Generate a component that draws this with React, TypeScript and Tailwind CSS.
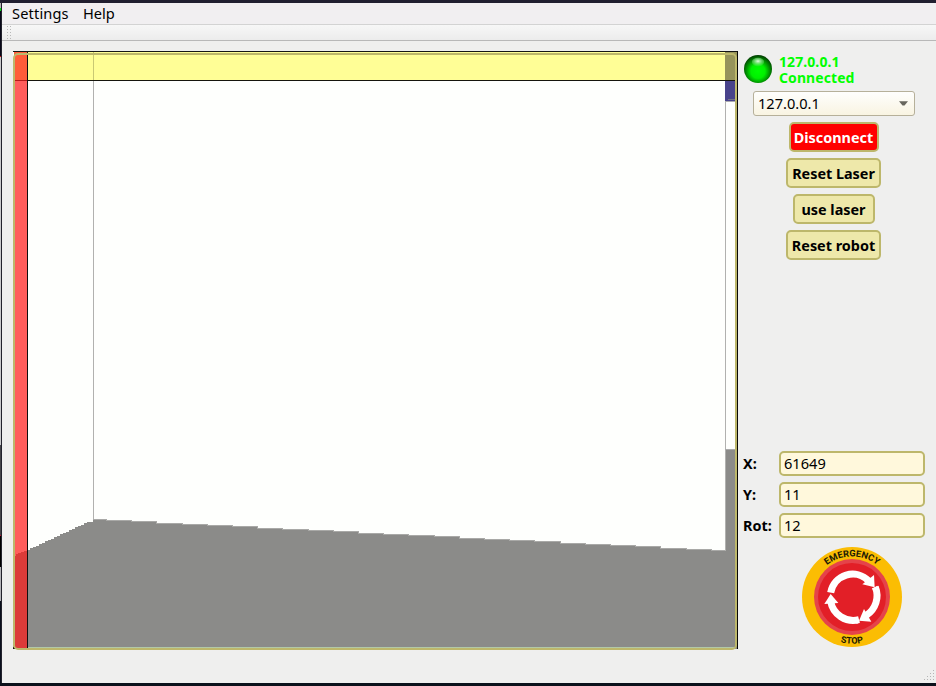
import React from "react";

const FONT = "font-['Noto_Sans','Open_Sans',sans-serif]";

function Edge() {
  return (
    <div className="flex w-[2px] shrink-0 flex-col border-r border-[#22222c] bg-[#0a0f1c]">
      <div className="h-[5px] bg-[#b5b5b5]" />
      <div className="h-[3px] bg-[#00e010]" />
      <div className="h-[45px] bg-[#080818]" />
      <div className="h-px bg-[#d01010]" />
      <div className="h-[388px] bg-[#c9c9cb]" />
      <div className="h-[90px] bg-[#45454a]" />
      <div className="h-px bg-[#c01030]" />
      <div className="h-[31px] bg-black" />
      <div className="h-[34px] bg-[#b4b4b8]" />
    </div>
  );
}

const rampSteps = [
  "M0 505", "H3", "V503",
  ...Array.from({ length: 24 }, (_, i) => `H${5 + i * 3} V${(503 - i * 1.4).toFixed(0)}`),
  "H80 V468 H93",
].join(" ");
const slopeSteps = Array.from(
  { length: 25 },
  (_, i) => `H${Math.round(93 + i * 25.2)} V${Math.round(469 + i * 1.25)}`
).join(" ");
const profile = `${rampSteps} ${slopeSteps} H713 V398 H724 V598 H0 Z`;

function ScanView() {
  return (
    <svg className="block h-[600px] w-[725px] shrink-0" viewBox="0 0 725 600" shapeRendering="crispEdges">
      <rect x="0" y="0" width="725" height="597" fill="#fefffd" />
      <path d={profile} fill="#8b8b89" />
      <path d={`M80 468.5 H93 ${slopeSteps.replace(/V(\d+)/g, "V$1.5")} H713`} fill="none" stroke="#a9a9a7" />
      <rect x="80" y="1" width="1" height="467" fill="#b1b1af" />
      <rect x="712" y="30" width="1" height="470" fill="#b1b1af" />
      <rect x="712" y="398" width="11" height="1" fill="#aaa" />
      <rect x="713" y="30" width="9" height="20" fill="#48438b" />
      <rect x="712" y="30" width="1" height="20" fill="#48438b" />
      <rect x="715" y="48" width="7" height="1" fill="#747487" />
      <rect x="713" y="50" width="9" height="1" fill="#aaaaaf" />
      <rect x="14" y="1" width="710" height="28" fill="#fffe96" />
      <rect x="712" y="1" width="12" height="28" fill="#96935a" />
      <rect x="80" y="1" width="1" height="28" fill="#c9c873" />
      <rect x="0" y="29" width="724" height="1" fill="#15150c" />
      <rect x="1" y="1" width="13" height="596" fill="#ff0000" fillOpacity="0.635" />
      <path d="M1 505H3V503H5V502H8V501H11V500H14V597H1Z" fill="#dc3b39" />
      <rect x="1" y="1" width="13" height="28" fill="#ff5d39" />
      <rect x="1" y="29" width="13" height="1" fill="#b51919" />
      <rect x="14" y="0" width="1" height="597" fill="#101010" />
      <rect x="0" y="0" width="725" height="1" fill="#151515" />
      <rect x="0" y="596" width="2" height="2" fill="#151515" />
      <rect x="724" y="0" width="1" height="598" fill="#080808" />
      <rect x="15" y="596" width="707" height="1" fill="#b2c8a7" />
      <rect x="1" y="3" width="722" height="595" rx="4" fill="none" stroke="#bdb76b" strokeWidth="2" shapeRendering="auto" />
    </svg>
  );
}

function Led() {
  return (
    <svg className="h-7 w-7 shrink-0" viewBox="0 0 28 28">
      <defs>
        <radialGradient id="led" cx="50%" cy="58%" r="56%">
          <stop offset="0" stopColor="#00ff00" />
          <stop offset=".45" stopColor="#00f000" />
          <stop offset=".75" stopColor="#009000" />
          <stop offset="1" stopColor="#004300" />
        </radialGradient>
        <radialGradient id="shine" cx="50%" cy="40%" r="55%">
          <stop offset="0" stopColor="#e0ffe0" />
          <stop offset="1" stopColor="#70e070" stopOpacity=".3" />
        </radialGradient>
      </defs>
      <circle cx="14" cy="14" r="14" fill="url(#led)" />
      <ellipse cx="14" cy="7" rx="6.2" ry="4.2" fill="url(#shine)" />
    </svg>
  );
}

function EmergencyStop() {
  return (
    <svg className="block h-[100px] w-[100px]" viewBox="36 21 300 300">
      <defs>
        <path id="arcTop" d="M64 171 A122 122 0 0 1 308 171" />
        <path id="arcBottom" d="M46 171 A140 140 0 0 0 326 171" />
      </defs>
      <circle cx="186" cy="171" r="150" fill="#fbbd03" />
      <circle cx="186" cy="171" r="114" fill="#e5434a" />
      <circle cx="186" cy="171" r="102" fill="#e21f27" />
      <g fill="none" stroke="#fff" strokeWidth="21">
        <path d="M122 158 A67 68 0 0 1 236 123" />
        <path d="M256 141 A70 70 0 0 1 229 226" />
        <path d="M207 239 A69 69 0 0 1 122 184" />
      </g>
      <g fill="#fff">
        <path d="M252 105 L254 142 L217 133 Z" />
        <path d="M244 245 L207 242 L222 207 Z" />
        <path d="M103 192 L122 162 L145 189 Z" />
        <path d="M245 147 L262 137 L268 155 Z" />
        <path d="M196 230 L209 246 L200 252 Z" />
      </g>
      <g className="font-['Roboto',sans-serif] font-bold" fill="#201a05" fontSize="27">
        <text textAnchor="middle" textLength="163" lengthAdjust="spacingAndGlyphs">
          <textPath href="#arcTop" startOffset="50%">EMERGENCY</textPath>
        </text>
        <text textAnchor="middle">
          <textPath href="#arcBottom" startOffset="50%">STOP</textPath>
        </text>
      </g>
    </svg>
  );
}

function ActionButton({ label, className }: { label: string; className: string }) {
  return (
    <button className={`flex h-[30px] items-center justify-center whitespace-nowrap rounded-[5px] border-2 border-[#bdb76b] pt-[2px] text-[14.4px] font-bold leading-none ${className}`}>
      {label}
    </button>
  );
}

function Field({ label, value }: { label: string; value: string }) {
  return (
    <div className="flex h-[25px] items-center">
      <span className="w-9 shrink-0 whitespace-nowrap pt-[2px] text-[14.4px] font-bold leading-none">{label}</span>
      <div className="flex h-[25px] w-[146px] items-center rounded-[5px] border-2 border-[#bdb76b] bg-[#fff8dc] pl-[3px] text-[14.6px] leading-none">
        {value}
      </div>
    </div>
  );
}

export default function App() {
  return (
    <div className={`flex h-[686px] w-[936px] flex-col overflow-hidden bg-[#efefee] text-black ${FONT}`}>
      <div className="h-[3px] shrink-0 bg-[#211f30]" />
      <div className="flex h-[680px]">
        <Edge />
        <div className="flex min-w-0 flex-1 flex-col">
          <nav className="flex h-[21px] items-center gap-[14px] bg-[#f1eff1] pl-[10px] text-[14.6px] leading-none">
            <span className="w-[57px] tracking-[0.15px]">Settings</span>
            <span>Help</span>
          </nav>
          <div className="flex h-[17px] items-center border-b border-t border-b-[#b8b8b8] border-t-[#d3d3d3] bg-gradient-to-b from-[#f7f7f7] to-[#ececec] pl-[5px]">
            <svg className="h-[15px] w-[6px]" viewBox="0 0 6 15" shapeRendering="crispEdges">
              {[0, 3, 6, 9, 12].map((y) => (
                <g key={y} fill="#b8b8b8">
                  <rect x="0" y={y + 1} width="1" height="1" />
                  <rect x="3" y={y + 1} width="1" height="1" />
                </g>
              ))}
            </svg>
          </div>
          <main className="flex h-[610px] pl-[11px] pt-[10px]">
            <ScanView />
            <aside className="flex h-[600px] w-[198px] flex-col pl-[5px]">
              <div className="flex h-9 items-start gap-[7px] pl-px pt-[4px]">
                <Led />
                <div className="-mt-px whitespace-pre text-[14px] font-bold leading-4 tracking-[0.08px] text-[#00ff00]">
                  {"127.0.0.1\nConnected"}
                </div>
              </div>
              <div className="ml-[10px] mt-[4px] flex h-[25px] w-[162px] items-center justify-between rounded-[3px] border border-[#b6b09a] bg-gradient-to-b from-[#fefefd] to-[#f9f4e2] pl-1 pr-[6px] text-[14.6px] leading-none">
                <span>127.0.0.1</span>
                <svg className="h-[5px] w-[9px]" viewBox="0 0 9 5">
                  <path d="M0 .3H9L5.5 4.5H3.5Z" fill="#67665e" />
                </svg>
              </div>
              <div className="mt-[6px] flex w-[181px] flex-col items-center gap-[6px]">
                <ActionButton label="Disconnect" className="w-[90px] bg-[#ff0000] text-white" />
                <ActionButton label="Reset Laser" className="w-[95px] bg-[#eee8aa]" />
                <ActionButton label="use laser" className="w-[82px] bg-[#eee8aa]" />
                <ActionButton label="Reset robot" className="w-[95px] bg-[#eee8aa]" />
              </div>
              <div className="mt-[191px] flex flex-col gap-[6px]">
                <Field label="X:" value="61649" />
                <Field label="Y:" value="11" />
                <Field label="Rot:" value="12" />
              </div>
              <div className="mt-[9px] pl-[59px]">
                <EmergencyStop />
              </div>
            </aside>
          </main>
          <footer className="flex flex-1 items-end justify-end pb-[2px] pr-px">
            <svg className="h-[11px] w-[12px]" viewBox="0 0 12 11" shapeRendering="crispEdges" fill="#b5b5b5">
              {[[10, 0], [7, 3], [10, 3], [4, 6], [7, 6], [10, 6], [1, 9], [4, 9], [7, 9], [10, 9]].map(([x, y]) => (
                <rect key={`${x}-${y}`} x={x} y={y} width="1" height="1" />
              ))}
            </svg>
          </footer>
        </div>
      </div>
      <div className="h-[3px] shrink-0 bg-[#0b111b]" />
    </div>
  );
}
